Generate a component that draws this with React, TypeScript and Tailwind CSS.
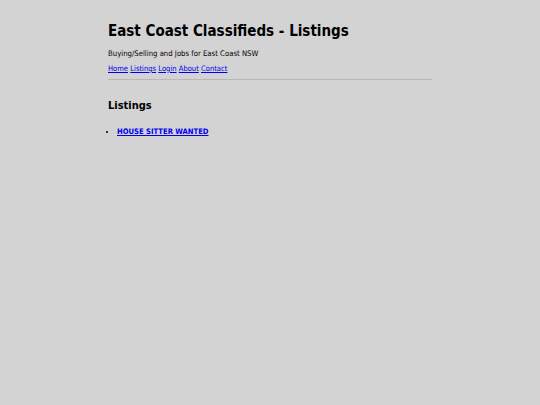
export default function App() {
  return (
    <div className="min-h-[405px] w-full bg-[#d3d3d3] font-['DejaVu_Sans_Condensed','DejaVu_Sans',sans-serif] text-black">
      <div className="mx-auto w-[324px] pt-[22px]">
        <h1 className="text-[15px] font-bold leading-[18px]">East Coast Classifieds - Listings</h1>
        <p className="mt-[9px] text-[7.7px] leading-[10px]">Buying/Selling and Jobs for East Coast NSW</p>
        <nav className="mt-[5px] text-[7.55px] leading-[10px]">
          <a href="#" className="text-[#0000ee] underline">Home</a>{' '}
          <a href="#" className="text-[#0000ee] underline">Listings</a>{' '}
          <a href="#" className="text-[#0000ee] underline">Login</a>{' '}
          <a href="#" className="text-[#0000ee] underline">About</a>{' '}
          <a href="#" className="text-[#0000ee] underline">Contact</a>
        </nav>
        <hr className="mt-[5px] border-t border-[#b8b8b8]" />
        <h2 className="mt-[19px] text-[11px] font-bold leading-[14px]">Listings</h2>
        <ul className="mt-[14px] list-disc pl-[9px] text-[7.6px] leading-[10px]">
          <li>
            <a href="#" className="font-bold text-[#0000ee] underline">HOUSE SITTER WANTED</a>
          </li>
        </ul>
      </div>
    </div>
  );
}
